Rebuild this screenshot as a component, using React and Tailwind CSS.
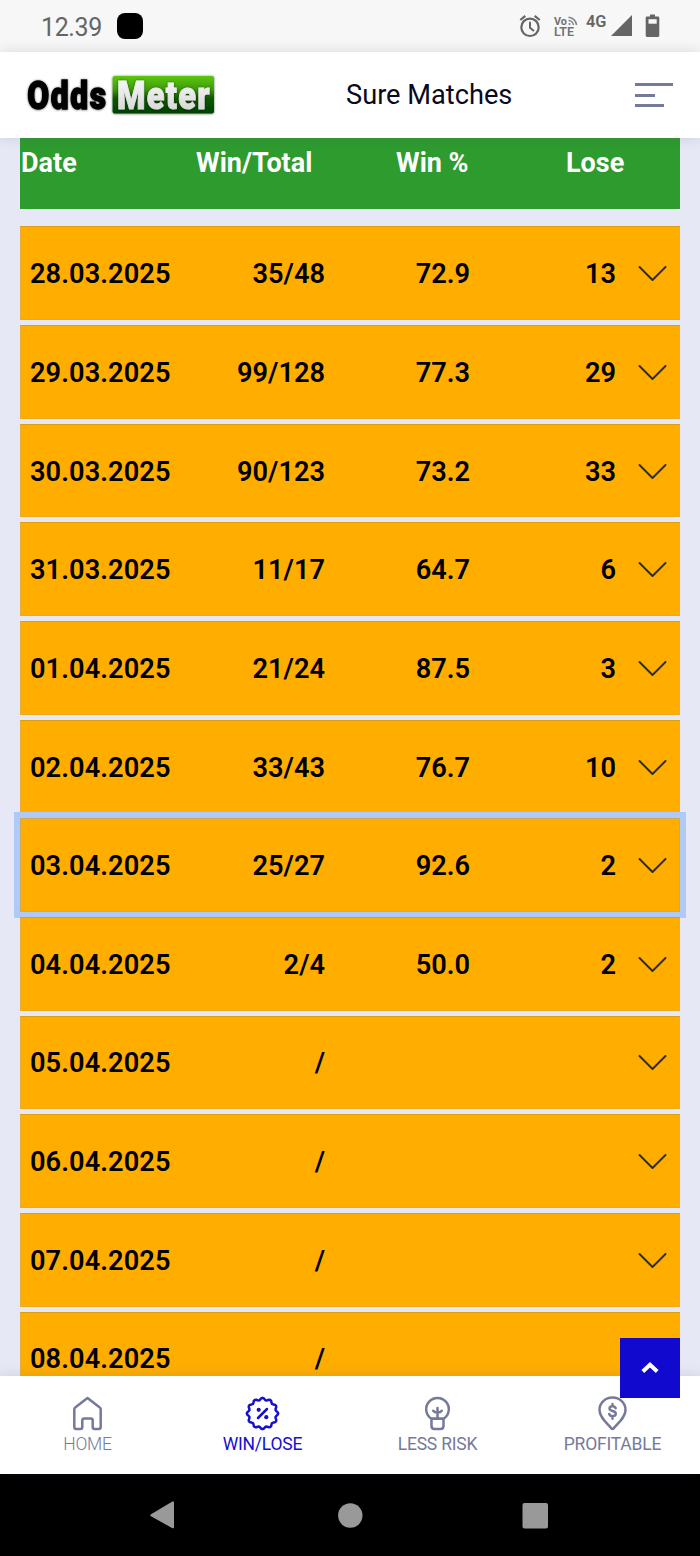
import clsx from 'clsx'

const rows = [
  { date: '28.03.2025', score: '35/48', percent: '72.9', lose: '13' },
  { date: '29.03.2025', score: '99/128', percent: '77.3', lose: '29' },
  { date: '30.03.2025', score: '90/123', percent: '73.2', lose: '33' },
  { date: '31.03.2025', score: '11/17', percent: '64.7', lose: '6' },
  { date: '01.04.2025', score: '21/24', percent: '87.5', lose: '3' },
  { date: '02.04.2025', score: '33/43', percent: '76.7', lose: '10' },
  { date: '03.04.2025', score: '25/27', percent: '92.6', lose: '2', focused: true },
  { date: '04.04.2025', score: '2/4', percent: '50.0', lose: '2' },
  { date: '05.04.2025', score: '/' },
  { date: '06.04.2025', score: '/' },
  { date: '07.04.2025', score: '/' },
  { date: '08.04.2025', score: '/' },
]

function StatusBar() {
  return (
    <div className="flex h-[52px] shrink-0 items-center justify-between bg-[#f7f7f7] pl-[41px] text-[#656565]">
      <div className="flex items-center">
        <span className="w-[76px] text-[25px] leading-[50px] tracking-[-0.4px] pt-[4px]">12.39</span>
        <span className="size-[26px] rounded-[8px] bg-black" />
      </div>
      <svg width="190" height="52" viewBox="510 0 190 52" fill="none" stroke="#656565">
        {/* alarm */}
        <circle cx="530" cy="27.3" r="8.7" strokeWidth="2.2" />
        <path d="M530 21.8v6l4 3.2" strokeWidth="2" />
        <path d="M520.3 20l5-4.2M539.7 20l-5-4.2" strokeWidth="2.2" />
        {/* VoLTE */}
        <text x="554" y="24.5" textLength="13" lengthAdjust="spacingAndGlyphs" fontSize="11" fontWeight="700" fill="#737373" stroke="none">Vo</text>
        <text x="554" y="35.8" textLength="20" lengthAdjust="spacingAndGlyphs" fontSize="12" fontWeight="600" fill="#737373" stroke="none">LTE</text>
        <path d="M568.5 17.2a8.5 8.5 0 0 1 8 7.8M568.5 20.4a5 5 0 0 1 4.9 4.6" stroke="#838383" strokeWidth="1.5" />
        <circle cx="569.5" cy="24" r="1.1" fill="#838383" stroke="none" />
        {/* signal */}
        <text x="586" y="26.5" textLength="20.5" lengthAdjust="spacingAndGlyphs" fontSize="16" fontWeight="600" fill="#656565" stroke="none">4G</text>
        <path d="M611 36L632 15V36z" fill="#656565" stroke="none" />
        {/* battery */}
        <path d="M650 14.5h5v2h3q1.3 0 1.3 1.3v17.8q0 1.3-1.3 1.3h-11q-1.3 0-1.3-1.3V17.8q0-1.3 1.3-1.3h3z" fill="#656565" stroke="none" />
        <path d="M648.5 19.2h8.2v4.5h-8.2z" fill="#f7f7f7" stroke="none" />
      </svg>
    </div>
  )
}

function Logo() {
  return (
    <svg width="200" height="64" viewBox="22 64 200 64">
      <defs>
        <linearGradient id="logo-green" x1="0" y1="0" x2="0" y2="1">
          <stop offset="0" stopColor="#5cc80a" />
          <stop offset="0.35" stopColor="#3f9c08" />
          <stop offset="0.6" stopColor="#0c5605" />
          <stop offset="1" stopColor="#024302" />
        </linearGradient>
        <linearGradient id="logo-silver" x1="0" y1="0" x2="0" y2="1">
          <stop offset="0" stopColor="#ffffff" />
          <stop offset="1" stopColor="#cfcfcf" />
        </linearGradient>
        <filter id="logo-shadow" x="-10%" y="-20%" width="120%" height="140%">
          <feDropShadow dx="0" dy="0.3" stdDeviation="1" floodColor="#000" floodOpacity="0.6" />
        </filter>
      </defs>
      <g fontFamily="Roboto, sans-serif" fontWeight="900" filter="url(#logo-shadow)">
        <text x="27.2" y="109.5" fontSize="39.5" letterSpacing="2" textLength="80.5" lengthAdjust="spacingAndGlyphs" fill="#000" stroke="#000" strokeWidth="1.4">Odds</text>
      </g>
      <rect x="112.6" y="77" width="101.4" height="37.6" rx="2" fill="url(#logo-green)" filter="url(#logo-shadow)" />
      <g fontFamily="Roboto, sans-serif" fontWeight="900" filter="url(#logo-shadow)">
        <text x="117" y="109.5" fontSize="39.5" letterSpacing="1.6" textLength="94" lengthAdjust="spacingAndGlyphs" fill="url(#logo-silver)" stroke="url(#logo-silver)" strokeWidth="0.9">Meter</text>
      </g>
    </svg>
  )
}

function Header() {
  return (
    <header className="z-10 flex h-[86px] shrink-0 items-center bg-white pl-[22px] pr-[27px] shadow-[0_0_12px_rgba(60,60,110,0.16)]">
      <Logo />
      <h1 className="ml-[124px] text-[27.2px] leading-[86px] text-[#090920]">Sure Matches</h1>
      <div className="ml-auto flex w-[38px] flex-col gap-[7.5px]">
        <span className="h-[3px] w-[38px] bg-[#757a9b]" />
        <span className="h-[3px] w-[20px] bg-[#757a9b]" />
        <span className="h-[3px] w-[29px] bg-[#757a9b]" />
      </div>
    </header>
  )
}

function Row({ row }) {
  return (
    <div
      className={clsx(
        'flex h-[93.67px] shrink-0 items-center border pl-[9px] pr-3 text-[27.2px] leading-10 font-semibold text-black bg-[#ffae00]',
        row.focused
          ? 'border-[#cda95e] shadow-[0_0_0_6px_#afcaf8]'
          : 'border-t-[#dc9d17] border-x-[#e4ad3f] border-b-[#eaa91f]'
      )}
    >
      <span className="w-[142px] pt-[2px] tracking-[0.08px]">{row.date}</span>
      <span className="w-[153px] pt-[2px] text-right">{row.score}</span>
      <span className="w-[145px] pt-[2px] text-right">{row.percent}</span>
      <span className="w-[146px] pt-[2px] text-right">{row.lose}</span>
      <svg className="ml-auto" width="29" height="18" viewBox="0 0 29 18" fill="none" stroke="#2f2c22" strokeWidth="2" strokeLinecap="round" strokeLinejoin="round">
        <path d="M1.5 3l13 13 13-13" />
      </svg>
    </div>
  )
}

function Results() {
  return (
    <main className="h-[1238px] shrink-0 overflow-hidden bg-[#e6e8f5] pl-5 pr-[20.5px]">
      <div className="flex h-[71px] bg-[#2e9b2e] pl-px pt-[5px] text-[27px] font-bold leading-10 text-white">
        <span className="w-[175px]">Date</span>
        <span className="w-[200px]">Win/Total</span>
        <span className="w-[170px]">Win %</span>
        <span>Lose</span>
      </div>
      <div className="mt-[17.4px] flex flex-col gap-[5px]">
        {rows.map(row => <Row key={row.date} row={row} />)}
      </div>
    </main>
  )
}

function HomeIcon() {
  return (
    <path d="M17.5 2L29.5 11.3q1.200.8 1.200 2V31q0 2-2 2h-4q-2 0-2-2v-6.500q0-2-2-2h-6.400q-2 0-2 2V31q0 2-2 2H6.300q-2 0-2-2V13.300q0-1.200 1.200-2L17.500 2z" />
  )
}

// wavy badge outline with twelve lobes
const badgePath = Array.from({ length: 72 }, (_, i) => {
  const a = (i / 72) * Math.PI * 2
  const r = 14.6 + 1.1 * Math.cos(a * 12)
  return `${i ? 'L' : 'M'}${(17.5 + r * Math.cos(a)).toFixed(2)} ${(17.5 + r * Math.sin(a)).toFixed(2)}`
}).join('') + 'Z'

function PercentIcon() {
  return (
    <>
      <path d={badgePath} />
      <path d="M13 22l9-9" />
      <circle cx="13.700" cy="13.800" r="2.100" fill="currentColor" stroke="none" />
      <circle cx="21.300" cy="21.200" r="2.100" fill="currentColor" stroke="none" />
    </>
  )
}

function BulbIcon() {
  return (
    <>
      <path d="M11.500 22.800a11.300 11.300 0 1 1 12 0z" />
      <path d="M11.500 22.800h12v7.200q0 3-3 3h-6q-3 0-3-3z" />
      <path d="M17.500 12v10.500M13.200 14.800q1.300 1.800 4.300 1.800t4.300-1.800" />
    </>
  )
}

function PinIcon() {
  return (
    <>
      <path d="M17.500 1.600c7.300 0 13 5.300 13 12.300 0 7-6.500 12.400-11.600 18.200q-1.400 1.600-2.800 0C11 26.300 4.500 20.900 4.500 13.900c0-7 5.700-12.300 13-12.300z" />
      <path d="M20.700 12.200q-.8-2-3.200-2-3 0-3 2.300 0 1.800 3 2.500 3.300.7 3.300 2.800 0 2.300-3.300 2.300-2.600 0-3.300-2.100M17.500 8v2.200M17.500 20.100v2.600" strokeWidth="2.400" />
    </>
  )
}

const tabs = [
  { label: 'HOME', icon: HomeIcon, light: true },
  { label: 'WIN/LOSE', icon: PercentIcon, active: true },
  { label: 'LESS RISK', icon: BulbIcon },
  { label: 'PROFITABLE', icon: PinIcon },
]

function TabBar() {
  return (
    <nav className="relative z-10 grid h-[98px] shrink-0 grid-cols-4 bg-white shadow-[0_0_12px_rgba(60,60,110,0.16)]">
      {tabs.map(({ label, icon: Icon, active, light }) => (
        <div key={label} className={clsx('flex flex-col items-center pt-5', active ? 'text-[#1510d0]' : 'text-[#757a9b]')}>
          <svg width="35" height="35" viewBox="0 0 35 35" fill="none" stroke="currentColor" strokeWidth="2.500" strokeLinecap="round" strokeLinejoin="round">
            <Icon />
          </svg>
          <span className={clsx('mt-px text-[17.5px] leading-6 tracking-[-0.2px]', light && 'font-light')}>{label}</span>
        </div>
      ))}
      <button className="absolute -top-[38px] right-[20.5px] flex h-[59.500px] w-[59.500px] items-center justify-center bg-[#1209ce]">
        <svg width="18" height="12" viewBox="0 0 18 12" fill="none" stroke="#fff" strokeWidth="4">
          <path d="M1.800 9.500L9 2.800l7.200 6.700" />
        </svg>
      </button>
    </nav>
  )
}

function SystemNav() {
  return (
    <div className="flex h-[82px] shrink-0 items-center bg-black pl-[150px]">
      <svg width="400" height="30" viewBox="0 0 400 30" fill="#999">
        <path d="M1 14.200L22 1.700q2-1 2 1V27q0 2-2 1L1 16.200q-1.500-1 0-2z" />
        <circle cx="200.300" cy="15.500" r="12.200" />
        <rect x="372.500" y="3" width="25.500" height="25.500" rx="2" />
      </svg>
    </div>
  )
}

function App() {
  return (
    <div className="flex h-[1556px] w-[700px] flex-col overflow-hidden bg-[#e6e8f5] font-['Roboto',sans-serif]">
      <StatusBar />
      <Header />
      <Results />
      <TabBar />
      <SystemNav />
    </div>
  )
}

export default App
